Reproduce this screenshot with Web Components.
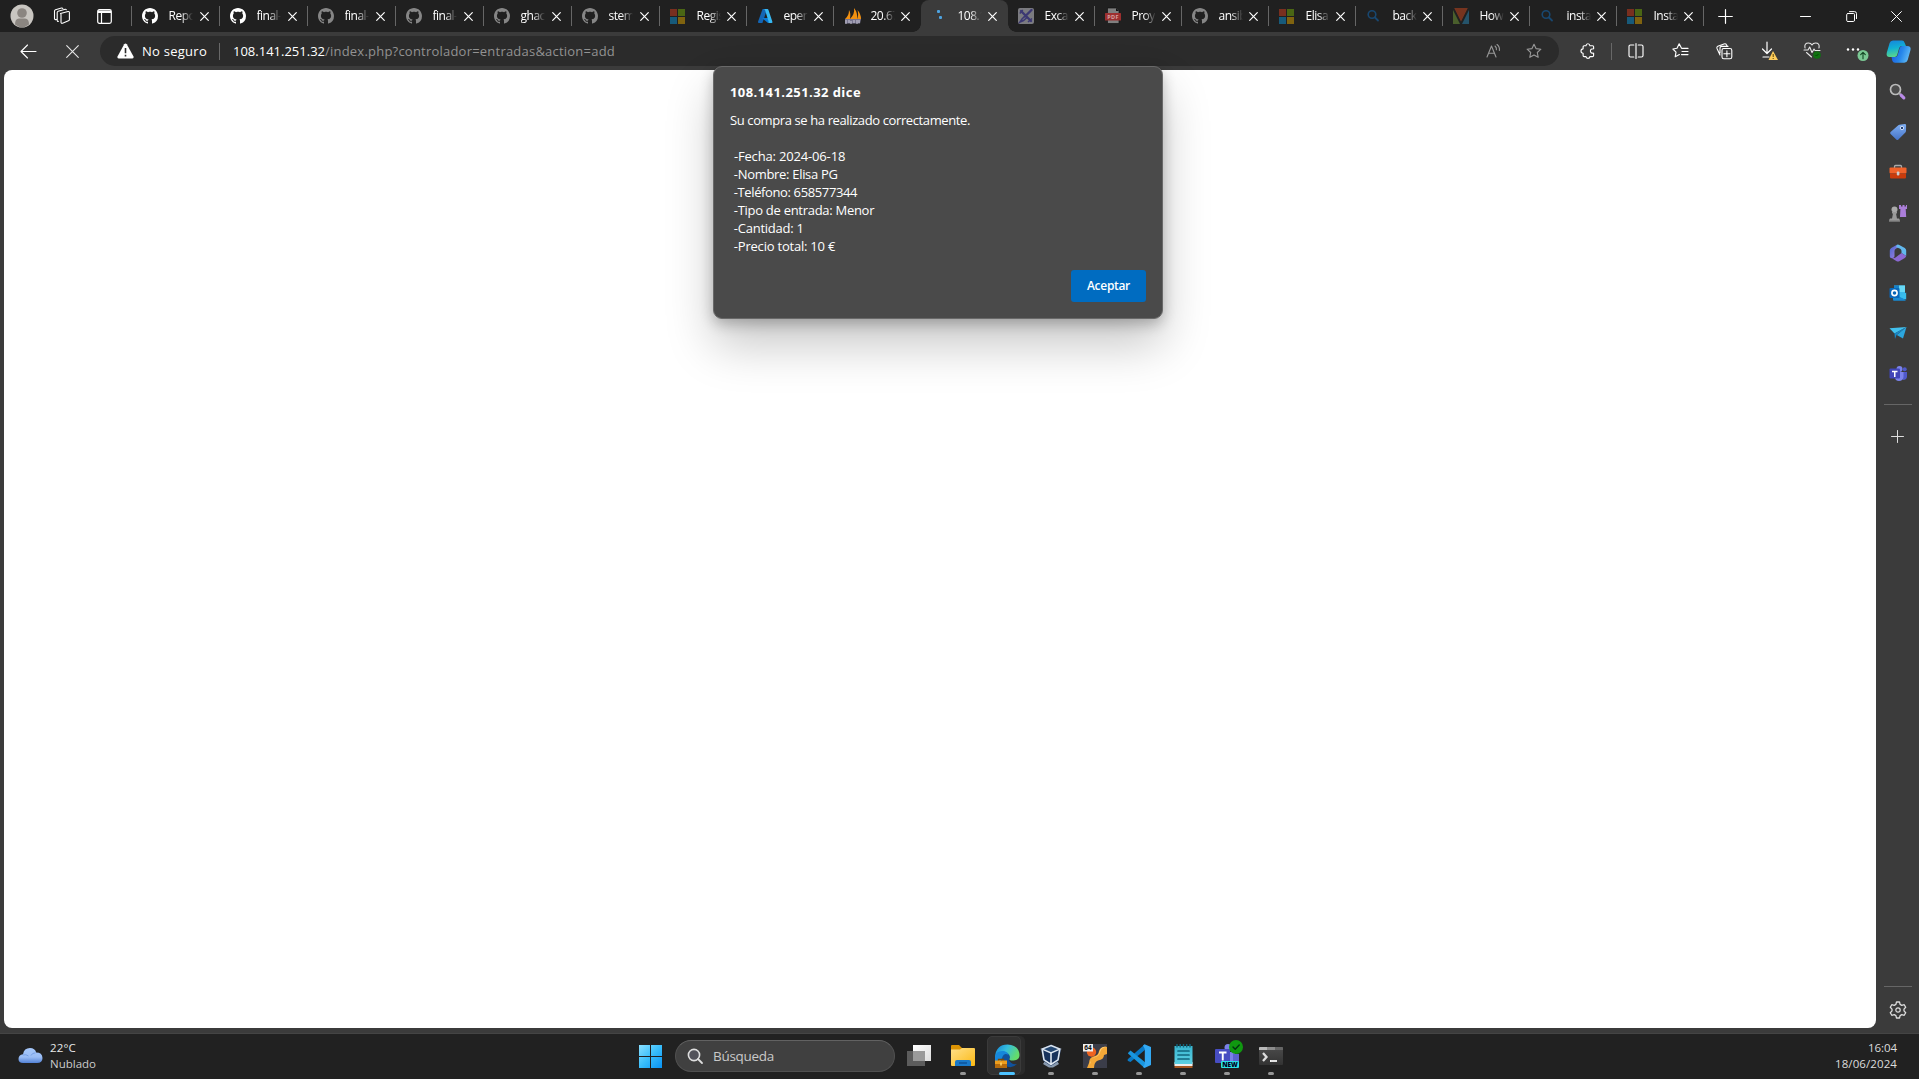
<!DOCTYPE html>
<html lang="es">
<head>
<meta charset="utf-8">
<title>108.141.251.32</title>
<style>
html,body{margin:0;height:100%;overflow:hidden;background:#3b3b3b}
body{font-family:"Open Sans","Noto Sans",sans-serif}
</style>
</head>
<body>
<desktop-screen></desktop-screen>
<script>
const CAT='<path transform="scale(SC)" fill="FC" d="M8 0C3.58 0 0 3.58 0 8c0 3.54 2.29 6.53 5.47 7.59.4.07.55-.17.55-.38 0-.19-.01-.82-.01-1.49-2.01.37-2.53-.49-2.69-.94-.09-.23-.48-.94-.82-1.13-.28-.15-.68-.52-.01-.53.63-.01 1.08.58 1.23.82.72 1.21 1.87.87 2.33.66.07-.52.28-.87.51-1.07-1.78-.2-3.64-.89-3.64-3.95 0-.87.31-1.59.82-2.15-.08-.2-.36-1.02.08-2.12 0 0 .67-.21 2.2.82.64-.18 1.32-.27 2-.27s1.36.09 2 .27c1.53-1.04 2.2-.82 2.2-.82.44 1.1.16 1.92.08 2.12.51.56.82 1.27.82 2.15 0 3.07-1.87 3.75-3.65 3.95.29.25.54.73.54 1.48 0 1.07-.01 1.93-.01 2.2 0 .21.15.46.55.38A8.01 8.01 0 0 0 16 8c0-4.42-3.58-8-8-8z"/>';
const line=(d,w=1.1,c='#fff')=>`<path d="${d}" fill="none" stroke="${c}" stroke-width="${w}" stroke-linecap="round" stroke-linejoin="round"/>`;
const STAR='M8 1.2l2 4.4 4.9.6-3.6 3.3.9 4.8L8 11.9l-4.2 2.4.9-4.8L1.1 6.2 6 5.6z';
/* each entry: [width, height, markup] */
const ICONS={
 gh:[16,16,CAT.replace('SC','1').replace('FC','#fff')],
 ghdim:[16,16,CAT.replace('SC','1').replace('FC','#868686')],
 ms:[15,15,'<path fill="#792f1f" d="M0 0h7v7H0z"/><path fill="#4a6614" d="M8 0h7v7H8z"/><path fill="#175a7a" d="M0 8h7v7H0z"/><path fill="#80630f" d="M8 8h7v7H8z"/>'],
 azure:[16,16,'<path fill="#1365b5" d="M5.6 1h4.6L5.4 15H2Q.7 15 1.1 13.6z"/><path fill="#0a7ad8" d="M5 10h6.5l1 4-1.500 1z"/><path fill="#37b8f2" d="M6 1h4.500q.7 0 .9.7l4 12Q15.700 15 14.500 15H11q1-.3.600-1.600L8 2Q7.700 1 6 1z"/>'],
 pma:[18,16,'<path fill="#f29111" d="M1 11Q5 8 5 2q2 3 1 9zM6 11Q11 6 10 0q4 5 3 11zM13 11q2-4 .5-9Q17 6 17 11z"/><path d="M1 11h16l-1 4.500H1z" fill="#77758f"/><path d="M2 16v-4M5 12v3M7 13v3M10 12v3M13 12v4M15 12v3" stroke="#d5d3df" stroke-width=".9"/>'],
 spin:[16,16,'<rect x="6" y="2" width="3" height="3" rx="1" fill="#4ea3e0"/><rect x="8" y="8" width="3" height="3" rx="1" fill="#4ea3e0"/>'],
 exca:[16,16,'<rect width="16" height="16" rx="2" fill="#7b7b80"/><path d="M3 3l10 10M13.500 2L7 8.500" stroke="#3c3873" stroke-width="2.400" stroke-linecap="round"/><path d="M7 8l-3 3-2 3 3.500-1.500L9 9.500M1.800 5.500l3-3.500M10 14l4-3.500" stroke="#3c3873" stroke-width="1.500" fill="none"/>'],
 pdf:[16,16,'<path d="M2.500 0h9L14 2.500V15.500H2.500z" fill="#7f7f7f" stroke="#111" stroke-width=".7"/><path d="M11 0v3h3" fill="#111"/><rect x="0" y="5" width="16" height="7.500" rx=".5" fill="#9c2f2f"/>','PDF'],
 find:[16,16,'<circle cx="6" cy="6.500" r="3.800" fill="none" stroke="#184770" stroke-width="1.600"/><path d="M9 9.500L12 12.500" stroke="#184770" stroke-width="1.800" stroke-linecap="round"/>'],
 v:[16,16,'<path fill="#76341f" d="M1 0h14L8 14z"/><path fill="#4a5f2c" d="M0 2l7 14H0z"/><path fill="#25536a" d="M16 2L9 16h7z"/><path d="M.5 0L8 15 15.500 0" fill="none" stroke="#222" stroke-width="1"/>'],
 close:[9,9,line('M.7.700l7.600 7.600M8.300.7L.7 8.300',1.2)],
 user:[24,24,'<circle cx="12" cy="12" r="11.500" fill="#c9c6c1"/><circle cx="12" cy="9" r="4.800" fill="#8b8681"/><path fill="#8b8681" d="M5 20.500q0-6 4-6h6q4 0 4 6Q12 26 5 20.500z"/>'],
 spaces:[18,18,line('M7.500 6.500l7.500-2q1.300-.3 1.400 1v7q0 1-1 1.300l-5.800 2.400q-1.500.5-1.600-1V7.500q0-.7-.5-1zM5.500 14.300q-1.300.5-1.300-1V5.500q0-1 1-1.300l7-1.900q.8-.1 1.100.5M3.300 12.400q-1.600.6-1.800-.8V4q0-1 1-1.300L8.500 1q1-.2 1.300.5',1.1)],
 tabact:[15,15,line('M2.500.7h10q1.800 0 1.800 1.800v10q0 1.800-1.800 1.800h-10q-1.800 0-1.800-1.800v-10Q.7.700 2.500.7zM4.500 4v10',1.2)+'<path d="M1 1.500h13V4H1z" fill="#fff"/>'],
 plus:[15,15,line('M7.500.7v13.600M.7 7.500h13.600',1.2)],
 plus2:[13,13,line('M6.500.5v12M.5 6.500h12',1,'#ddd')],
 min:[11,11,line('M.5 5.500h10',1)],
 rest:[11,11,line('M2 2.500h5.500q1 0 1 1V9q0 1.500-1 1.500H2Q.7 10.500.7 9.500V3.500q0-1 1.300-1zM3.500.600h5q2 0 2 2v5',1)],
 x11:[11,11,line('M.6.600l9.800 9.800M10.400.6L.6 10.400',1)],
 back:[17,15,line('M16 7.500H1M7.500 1L1 7.500 7.500 14',1.1)],
 stop:[13,13,line('M.7.700l11.600 11.600M12.300.7L.7 12.300',1.1,'#e8e8e8')],
 warn:[17,16,'<path d="M7.200 1.300q1.300-1.800 2.600 0l6.700 12.300q.6 1.900-1.200 2H1.700q-1.800-.1-1.200-2z" fill="#fff"/><path d="M8.500 5v5.200M8.500 11.800v1.700" stroke="#2b2b2b" stroke-width="1.600"/>'],
 star:[16,16,line(STAR,1.1,'#999')],
 read:[16,16,line('M1 14L5.500 3 10 14M2.700 10.200h5.600M9 3q1.800 1.500 1.400 3.800M11 1.500q2.800 2 2.400 6',1.1,'#999')],
 puzzle:[16,16,line('M5.400 2.700H6q.1-2 1.900-2t2 2h2.700q1 0 1 1v2.100q-3.200-.2-3.200 2.200t3.200 2.200v2.300q0 1.100-1.200 1.100H9.900q-.1 1.800-2 1.800T6 13.600H4.100q-1 0-1-1.100v-2.300Q1 10.200 1 8t2.100-2.200V3.700q0-1 1-1z',1.15)],
 split:[16,16,line('M5.800 2H2.500Q1 2 1 3.500v9Q1 14 2.500 14h3.300M10.200 2h3.300Q15 2 15 3.500v9q0 1.500-1.500 1.500h-3.300M8 .5v15',1.15)],
 favs:[17,16,line('M10 5.400L9.400 5 7.200.8 5 5.300.9 6l3.100 3.200-.8 4.600 4.200-2.300M10.500 5.400H16M10 8.500h6M9.500 11.600H16',1.15)],
 coll:[17,17,line('M7.500 5.500h6.500q1.800 0 1.800 1.800V14q0 1.800-1.800 1.800H7.800Q6 15.800 6 14V7.300q0-1.800 1.500-1.800zM10.900 7.700v6M7.900 10.700h6M4 12L1 5.500Q.4 4 1.800 3.300L8 .9q1.800-.6 2.600 1l.6 1.300M4 10V5.200Q4 3.400 5.500 3.400h6.500',1.1)],
 down:[20,20,line('M8 1v11M3.500 8L8 12.500 12.500 8M4 16h6',1.2)+'<path d="M14 10l5 9H9.500z" fill="#ffce5c"/><path d="M14.200 13v3M14.200 17v1" stroke="#5a4300" stroke-width="1"/>'],
 heart:[20,18,line('M2 6Q1 1 5.500 1 8 1 9 3q1-2 3.500-2Q17 1 16 6M1 8h4l1.700-3L9 10.500 11 7l1 1.500h5M3.500 10.500L8.500 15',1.1,'#e7e7e7')+'<circle cx="14" cy="13" r="3.800" fill="#0f7010"/><path d="M12.500 13l1 1 2-2" fill="none" stroke="#064706"/>'],
 more:[24,20,'<circle cx="3" cy="8.500" r="1.200" fill="#fff"/><circle cx="8" cy="8.500" r="1.200" fill="#fff"/><circle cx="13" cy="8.500" r="1.200" fill="#fff"/><circle cx="18" cy="14.500" r="5.500" fill="#7bc894"/>'+line('M18 17.700V11.500M15.700 13.700l2.300-2.300 2.300 2.300',1.1,'#124723')],
 copilot:[25,23,'<defs><linearGradient id="a" x2=".2" y2="1"><stop stop-color="#1783dd"/><stop offset=".5" stop-color="#11afd3"/><stop offset="1" stop-color="#58d58d"/></linearGradient><linearGradient id="b" x2="1" y2=".3"><stop stop-color="#184ee1"/><stop offset=".6" stop-color="#2687ea"/><stop offset="1" stop-color="#5bb5f4"/></linearGradient></defs><path fill="url(#a)" d="M7 .5h9q2 0 2.600 2.200L20 6h-4q-2 0-2.800 2l-2 7q-.6 2-2.500 2H3.500Q0 17 .7 13L3.600 3Q4.300.5 7 .5z"/><path fill="url(#b)" d="M13.700 8q.8-2 2.500-2H21q4.400 0 3.500 4l-2.800 10q-.9 2.700-3.500 2.700H9q-2 0-2.700-2L5.500 17h3.700q2 0 2.500-2z"/>'],
 s1:[18,18,'<circle cx="6.500" cy="6.500" r="5" fill="#4b4b4b" stroke="#bbb" stroke-width="1.700"/><path d="M10 10l2 2" stroke="#aaa" stroke-width="1.800"/><path d="M12.300 12.300l2.500 2.500" stroke="#b98be8" stroke-width="3.200" stroke-linecap="round"/>'],
 s2:[18,18,'<defs><linearGradient id="t" x2="0" y2="1"><stop stop-color="#7eaef3"/><stop offset="1" stop-color="#4674c8"/></linearGradient></defs><path fill="url(#t)" d="M10.500 1.800L15.800 1q1.300 0 1.300 1.200L17 8q-.1.900-.6 1.400l-7 7q-1 1-2.100 0L1.600 11q-1-1 0-2l7.700-6.700q.5-.4 1.200-.5z"/><circle cx="13" cy="5" r="1.700" fill="#234379" stroke="#dce9ff" stroke-width=".9"/>'],
 s3:[18,16,'<path d="M5.500 4V2.500q0-1 1-1h5q1 0 1 1V4" fill="none" stroke="#aaa" stroke-width="1.300"/><rect x=".5" y="3.500" width="17" height="6" rx="1" fill="#f0622a"/><path d="M1 9.500h16v4q0 1-1 1H2q-1 0-1-1z" fill="#c93b0b"/><rect x="7.800" y="7.500" width="2.600" height="4" rx="1" fill="#ccc"/>'],
 s4:[18,18,'<path fill="#ab7ed9" d="M10 1h2v1.500h1.500V1h2v1.500H17V1h1v4h-1.300l.5 8H11l.4-8H10z"/><circle cx="5.500" cy="5.500" r="3" fill="#aaa"/><path fill="#9a9a9a" d="M3 8h5v1.500H7l1 5h2q1 1 1 3H0q0-2 1-3h2l1-5H3z"/><path d="M0 17h11" stroke="#777"/>'],
 s5:[18,18,'<defs><linearGradient id="m" x2="1" y2="1"><stop stop-color="#4767d0"/><stop offset="1" stop-color="#a980e2"/></linearGradient></defs><path fill="url(#m)" d="M8 .8L2.200 4Q.8 5 .8 6.500v6q0 1.500 2 1.800 2 .2 2.700-1.800V7q0-1.500 1.300-2.200L10 3z"/><path fill="#62b8ed" d="M8 .8q1.200-.5 2.300.2L15.800 4Q17.200 5 17.200 6.500V12L12.500 9V7q0-1.500-1.300-2.200L7 3z"/><path fill="#8b69d2" d="M17.200 12q-.2 1.200-1.400 2l-5.500 3.200q-1.300.8-2.600 0L2.800 14.300q2 .2 3.700-.8l6-4.500z"/>'],
 s6:[18,16,'<path fill="#38b9ea" d="M5 .5h11V14H5z"/><path fill="#1580c9" d="M5 .5h5V7H5z"/><path fill="#67d8f5" d="M10 .5h6V7h-6z"/><path fill="#178ad3" d="M4 8l13 7q-.5.700-1.300.7H5q-1 0-1-1z"/><path fill="#39bdec" d="M17.200 7.500v7L10 11.500z"/><rect x=".5" y="3" width="10" height="10" rx="1" fill="#0867b9"/><circle cx="5.500" cy="8" r="2.600" fill="none" stroke="#fff" stroke-width="1.600"/>'],
 s7:[18,14,'<path fill="#42c1ee" d="M.5 2.200L17.500 1 5.500 7.500z"/><path fill="#1687c8" d="M5.500 7.500L17.500 1 7.500 9l-1.500 4z"/><path fill="#2ba6de" d="M17.500 1L14 12.500 7.800 9z"/>'],
 s8:[18,17,'<circle cx="10.500" cy="4" r="3" fill="#7b83eb"/><circle cx="15.700" cy="4.300" r="2" fill="#5059c9"/><path fill="#5059c9" d="M12 7h6v5q-.5 3-4 3z"/><path fill="#7b83eb" d="M6 7h8.500v5q-.5 4-4.500 4t-4-4z"/><rect x=".5" y="3.500" width="10.500" height="10" rx="1" fill="#4146b8"/><path d="M3 6.500h5.500M5.750 6.500V12" stroke="#fff" stroke-width="1.500"/>'],
 gear:[18,18,line('M7.500 1h3l.6 2.400 1.700 1 2.400-.7 1.500 2.600L15 8.100v1.800l1.700 1.800-1.500 2.600-2.400-.7-1.700 1-.6 2.400h-3l-.6-2.400-1.700-1-2.400.7-1.500-2.600L3 9.900V8.100L1.300 6.300l1.500-2.600 2.400.7 1.700-1z',1.3,'#ddd')+'<circle cx="9" cy="9" r="2.200" fill="none" stroke="#ddd" stroke-width="1.200"/>'],
 cloud:[25,17,'<defs><linearGradient id="c" x2="0" y2="1"><stop stop-color="#a6c8fb"/><stop offset=".6" stop-color="#9abdf5"/><stop offset="1" stop-color="#5382d6"/></linearGradient></defs><path fill="url(#c)" d="M5 16q-4.500 0-4.500-4T5 7.300Q6 1 12 1q5 0 6.200 4.600 6 0 6.300 5.300Q24.500 16 19 16z"/><path d="M5 8q3-1 5.500 1M17.500 5.800Q14 6 13 8.500" stroke="#769fe4" fill="none"/>'],
 win:[23,23,'<defs><linearGradient id="w" gradientUnits="userSpaceOnUse" x1="0" y1="0" x2="23" y2="23"><stop stop-color="#8ae0ff"/><stop offset=".5" stop-color="#38bdfb"/><stop offset="1" stop-color="#0892f4"/></linearGradient></defs><path fill="url(#w)" d="M0 0h11v11H0zM12 0h11v11H12zM0 12h11v11H0zM12 12h11v11H12z"/>'],
 tfind:[16,16,'<circle cx="7" cy="7" r="5.600" fill="#52525a" stroke="#dedede" stroke-width="1.600"/><path d="M11 11l4 4" stroke="#dedede" stroke-width="1.800" stroke-linecap="round"/>'],
 task:[24,22,'<defs><linearGradient id="q" x2="1" y2="1"><stop stop-color="#fff"/><stop offset="1" stop-color="#ddd"/></linearGradient></defs><path fill="url(#q)" d="M6 0h18v16H6z"/><path fill="#5c5c5c" d="M0 6h18v15H0z"/><path fill="#9a9a9a" d="M6 6h12v10H6z"/>'],
 files:[24,22,'<defs><linearGradient id="f" x2="1" y2="1"><stop stop-color="#ffe08a"/><stop offset="1" stop-color="#fcb913"/></linearGradient></defs><path fill="#dc9303" d="M0 1q0-1 1-1h7l3 3h11v6H0z"/><path fill="url(#f)" d="M0 4.500h9l2-1.500h12q1 0 1 1v16q0 1-1 1H1q-1 0-1-1z"/><path fill="#1a79c8" d="M4 21v-4q0-2 2-2h12q2 0 2 2v4z"/><path d="M8 18h8" stroke="#0b4d92" stroke-width="1.300"/>'],
 edge:[25,25,'<defs><linearGradient id="e" x2="1" y2=".4"><stop stop-color="#1180d6"/><stop offset=".5" stop-color="#35bede"/><stop offset="1" stop-color="#64dc6a"/></linearGradient></defs><path fill="#10529d" d="M8 8q-3 8 2 13 6 5 12-1-6 1-8-4l2-6z"/><path fill="url(#e)" d="M0 13Q1 .5 12.500.5 24 1 24.500 11q0 5-6 5.500-4 .2-4.200-1.500 1-1.500.4-3Q13 8 8.500 9 2 10 0 16z"/><path fill="#1687db" d="M0 13q1-7 9-6 4 1 4.500 4Q9 8 7 14l-2 6-5-2z"/><path d="M3.500 17v-1.500h5V17" stroke="#7c4906" fill="none" stroke-width="1.300"/><path fill="#ee9e1d" d="M0 16.500h12V24H0z"/><path fill="#b66b0c" d="M0 20h12v4H0z"/><path d="M6 18.500v3" stroke="#ffd76b" stroke-width="1.500"/>'],
 vbox:[22,24,'<path fill="#8a9bb0" d="M5 17h12l2 3-6 3.500H9L3 20z"/><path fill="#17325c" d="M11 .5l10 4.200-2 12L11 22l-8-5.300-2-12z"/><path fill="#254873" stroke="#dce5ef" stroke-width="1.500" d="M11 1.500l8.800 3.600L11 9 2.200 5.100z"/><path fill="none" stroke="#dce5ef" stroke-width="1.600" d="M2.200 5.500L4 15.800l7 4.700 7-4.700 1.800-10.300M11 9v11"/>'],
 putty:[24,24,'<path fill="#3b3d49" d="M0 0h24v24H0z"/><path fill="#f4a838" d="M24 3q-6-1-8 4-.5 4-4 5-6 1-6 7l-2 5h7q0-6 4-7.500 6-1 6-5.500l3-1z"/><path fill="#ffd27a" d="M24 3q-5 0-6.500 4-1 5-5 6-5 1-5 6l-1 2q1-7 6-8.500 3.500-1 4-5Q18 2 24 3z"/><circle cx="8.500" cy="8" r="4.700" fill="#ee6420"/><path fill="#eee" d="M0 0h10v7.500H0z"/>','64'],
 code:[24,24,'<path fill="#0878c5" d="M1 15L17 1l2 4L3.500 18 1 17q-1-1 0-2z"/><path fill="#1996df" d="M1 9l2.500-2.500L19 19l-2 4.500L1 9.500z"/><path fill="#33a9f3" d="M17.500.2L24 3v18l-6.500 3-1.500-1 1.800-3V5L16 1.500z"/>'],
 note:[19,24,'<defs><linearGradient id="n" x2="0" y2="1"><stop stop-color="#39b5cf"/><stop offset="1" stop-color="#5cd0e3"/></linearGradient></defs><path fill="#a65721" d="M.5 19h18v5H.5z"/><path fill="#eee" d="M.5 18h18v4H.5z"/><path fill="url(#n)" d="M.5 2h18v18H.5z"/><path d="M3 0v3.500M6.200 0v3.500M9.500 0v3.500M12.700 0v3.500M16 0v3.500" stroke="#12667d" stroke-width="1.400"/><path d="M4 7h11M4 11h11M4 15h11" stroke="#12667d" stroke-width="1.700" stroke-linecap="round"/>'],
 teams:[28,28,'<path fill="#7a80e8" d="M10 12h10v12H10z"/><path fill="#5b62cf" d="M18 14h6v10h-6z"/><circle cx="13" cy="7.500" r="3.500" fill="#7a80e8"/><rect x="0" y="9" width="15" height="14" rx="1" fill="#474dc2"/><path d="M4 12.500h7.500M7.750 12.500v8" stroke="#fff" stroke-width="1.900"/><circle cx="21" cy="7" r="7" fill="#109810"/>'+line('M18 7l2.200 2.200L24.200 5',1.4,'#031')+'<rect x="6" y="21" width="18" height="7" rx="1" fill="#2ce0e5"/>','NEW'],
 term:[24,18,'<defs><linearGradient id="k" x2="0" y2="1"><stop stop-color="#4b4b4b"/><stop offset="1" stop-color="#333"/></linearGradient></defs><rect width="24" height="18" rx="1" fill="url(#k)"/><path fill="#b9b9b9" d="M1 0h7v3H0V1q0-1 1-1z"/><path fill="#8c8c8c" d="M8 0h8v3H8z"/><path fill="#666" d="M16 0h7q1 0 1 1v2h-8z"/><path d="M4 6l3.500 4L4 14" stroke="#ddd" stroke-width="2.300" fill="none"/><path d="M11 14h7" stroke="#f4f4f4" stroke-width="1.800"/>']
};
class UiIcon extends HTMLElement{
 constructor(){super();this.attachShadow({mode:'open'})}
 connectedCallback(){
  const n=this.getAttribute('name'),[w,h,m,label]=ICONS[n];
  this.shadowRoot.innerHTML=`<style>:host{display:grid;flex:none;width:${w}px;height:${h}px;line-height:1}
  svg,span{grid-area:1/1}svg{display:block;overflow:visible}
  span{font:700 6px/7px "Open Sans",sans-serif;text-align:center;color:#fff;z-index:1}
  .pdf{padding-top:5.500px;color:#d9a3a3;font-size:5.500px;letter-spacing:.4px}
  .putty{color:#111;justify-self:start;width:10px;font-size:6.500px}
  .teams{color:#002;align-self:end;padding-left:2px;font-size:6.500px;font-weight:800}</style>
  <svg width="${w}" height="${h}" viewBox="0 0 ${w} ${h}" aria-hidden="true">${m}</svg>${label?`<span class="${n}">${label}</span>`:''}`;
 }
}
customElements.define('ui-icon',UiIcon);

/* A single line of text tracked so that it spans the given width. */
class FitText extends HTMLElement{
 constructor(){super();this.attachShadow({mode:'open'}).innerHTML='<style>:host{display:block;flex:none;white-space:pre}span{display:inline-block;white-space:pre}</style><span><slot></slot></span>'}
 connectedCallback(){
  const s=this.shadowRoot.querySelector('span');s.style.letterSpacing='0px';
  const n=this.textContent.length,w=+this.getAttribute('w');
  s.style.letterSpacing=((w-s.getBoundingClientRect().width)/n)+'px';this.style.width=w+'px';
 }
}

class BrowserTab extends HTMLElement{
 constructor(){super();this.attachShadow({mode:'open'}).innerHTML=`<style>
 :host{display:flex;flex:none;box-sizing:border-box;height:32px;align-items:center;padding-left:10px;position:relative;color:#fff;font-size:12px}
 :host([sep])::after{content:"";position:absolute;right:0;top:6px;width:1px;height:20px;background:#666}
 .i{width:26.500px;display:flex}
 .t{width:24px;margin-right:6.500px;overflow:hidden;white-space:nowrap;letter-spacing:-.5px;line-height:20px;-webkit-mask-image:linear-gradient(90deg,#000 50%,transparent);mask-image:linear-gradient(90deg,#000 50%,transparent)}
 :host([w="88"]) .t{margin-right:7.500px}
 :host([active]){background:#3b3b3b;border-radius:8px 8px 0 0;z-index:1}
 :host([active])::before{content:"";position:absolute;left:-8px;right:-8px;bottom:0;height:8px;
 background:radial-gradient(circle at 0 0,transparent 7.500px,#3b3b3b 8px) left/8px 8px no-repeat,radial-gradient(circle at 100% 0,transparent 7.500px,#3b3b3b 8px) right/8px 8px no-repeat}
 </style><span class="i"></span><span class="t"><slot></slot></span><ui-icon name="close"></ui-icon>`}
 connectedCallback(){this.style.width=this.getAttribute('w')+'px';
  this.shadowRoot.querySelector('.i').innerHTML=`<ui-icon name="${this.getAttribute('icon')}"></ui-icon>`}
}
customElements.define('browser-tab',BrowserTab);

const TABS=[['gh','Repos',88],['gh','final-',88],['ghdim','final-',88],['ghdim','final-',88],['ghdim','ghac',88],['ghdim','stem',88],['ms','Regis',87],['azure','eper',87],['pma','20.67',87],['spin','108.1',87,1],['exca','Excal',87],['pdf','Proy',87],['ghdim','ansib',87],['ms','Elisa',87],['find','back',87],['v','How',87],['find','insta',87],['ms','Insta',87]];
class TabStrip extends HTMLElement{
 constructor(){super();this.attachShadow({mode:'open'}).innerHTML=`<style>
 :host{display:flex;height:32px;background:#202020}
 .lead,.ctl{display:flex;align-items:center}
 .lead{box-sizing:border-box;width:132px;padding-left:10px}
 .lead::after{content:"";width:1px;height:20px;background:#666;margin-left:auto}
 .b{display:flex;justify-content:center;width:42px}
 .new{display:flex;align-items:center;margin-left:14px}
 .ctl{margin-left:auto}.ctl>span{display:flex;justify-content:center;width:46px}
 </style><div class="lead"><ui-icon name="user"></ui-icon><span class="b" style="margin-left:7px"><ui-icon name="spaces"></ui-icon></span><span class="b"><ui-icon name="tabact"></ui-icon></span></div>
 ${TABS.map(([i,t,w,a],k)=>`<browser-tab icon="${i}" w="${w}" ${a?'active':k==8?'':'sep'}>${t}</browser-tab>`).join('')}
 <div class="new"><ui-icon name="plus"></ui-icon></div>
 <div class="ctl"><span><ui-icon name="min"></ui-icon></span><span><ui-icon name="rest"></ui-icon></span><span style="width:45px"><ui-icon name="x11"></ui-icon></span></div>`}
}

class NavBar extends HTMLElement{
 constructor(){super();this.attachShadow({mode:'open'}).innerHTML=`<style>
 :host{display:flex;height:38px;box-sizing:border-box;padding-top:4px;background:#3b3b3b;color:#fff;font-size:13px;line-height:30px}
 :host>*,.c,.o{height:30px}
 .c{display:flex;align-items:center;justify-content:center;flex:none;width:44px}
 .o{display:flex;align-items:center;box-sizing:border-box;width:1459px;background:#2b2b2b;border-radius:15px;padding-left:17px;flex:none}
 .s{width:1px;height:17px;background:#686868}
 .p{color:#929292}
 </style><span class="c" style="padding-left:6px">
 <ui-icon name="back"></ui-icon></span><span class="c"><ui-icon name="stop"></ui-icon></span><span style="width:6px"></span>
 <div class="o"><ui-icon name="warn"></ui-icon><fit-text w="65" style="margin-left:8px">No seguro</fit-text><i class="s" style="margin:0 13px 0 12px"></i><fit-text w="92">108.141.251.32</fit-text><fit-text w="290" class="p">/index.php?controlador=entradas&amp;action=add</fit-text>
 <span class="c" style="width:40px;margin-left:auto;padding-left:1px"><ui-icon name="read"></ui-icon></span><span class="c" style="width:40px;margin-right:5px"><ui-icon name="star"></ui-icon></span></div>
 <span class="c" style="margin-left:7px"><ui-icon name="puzzle"></ui-icon></span><i class="s" style="margin:7px 2px 0 1px"></i>
 ${['split','favs','coll','down','heart','more'].map(n=>`<span class="c"><ui-icon name="${n}" ${/down|heart|more/.test(n)?'style="margin-left:2px"':''}></ui-icon></span>`).join('')}
 <span class="c" style="width:41px"><ui-icon name="copilot"></ui-icon></span>`}
}

class SideBar extends HTMLElement{
 constructor(){super();this.attachShadow({mode:'open'}).innerHTML=`<style>
 :host{display:flex;flex-direction:column;align-items:center;width:42px;flex:none;box-sizing:border-box;padding-top:2px}
 span{display:flex;align-items:center;justify-content:center;height:40.200px}
 hr{border:0;margin:0;width:28px;height:1px;background:#666}
 </style>${[1,2,3,4,5,6,7,8].map(n=>`<span><ui-icon name="s${n}"></ui-icon></span>`).join('')}
 <hr style="margin-top:10px"><span style="margin-top:12px;padding-right:1px"><ui-icon name="plus2"></ui-icon></span>
 <hr style="margin-top:auto"><span style="height:45px;margin-bottom:-4px"><ui-icon name="gear"></ui-icon></span>`}
}

class AlertDialog extends HTMLElement{
 constructor(){super();this.attachShadow({mode:'open'}).innerHTML=`<style>
 :host{display:flex;flex-direction:column;box-sizing:border-box;width:450px;height:253px;padding:16px 16px 16px;background:#4a4a4a;border:1px solid #696969;border-radius:9px;color:#fff;font-size:13px;line-height:18px;
 box-shadow:0 26px 48px rgba(0,0,0,.22),0 5px 14px rgba(0,0,0,.24)}
 h1{margin:0 0 9px;font-size:13px;line-height:19px;font-weight:700}
 button{align-self:flex-end;margin-top:auto;width:75px;height:32px;border:0;border-radius:3px;background:#006cc1;color:#fff;font:600 12px/32px "Open Sans",sans-serif;padding:0;display:flex;justify-content:center}
 </style><h1><slot name="title"></slot></h1><div><slot></slot></div><button><fit-text w="43">Aceptar</fit-text></button>`}
}

class TaskBar extends HTMLElement{
 constructor(){super();this.attachShadow({mode:'open'}).innerHTML=`<style>
 :host{display:grid;grid-template-columns:1fr auto 1fr;height:46px;box-sizing:border-box;background:#212121;color:#ddd;font-size:11.500px;line-height:16px;border-top:1px solid #444}
 .w{display:flex;align-items:center;padding:0 0 2px 18px;gap:7px;color:#e8e8e8}
 .m{display:flex;align-items:center;height:44px;padding-left:13px}
 .a{display:flex;position:relative;align-items:center;justify-content:center;width:44px;height:44px}
 .a.r::after{content:"";position:absolute;bottom:3px;width:6px;height:3px;border-radius:2px;background:#969696}
 .a.on::after{width:16px;background:#4cc2ff}
 .a.on::before{content:"";position:absolute;left:2px;top:2px;width:34px;height:39px;box-sizing:border-box;border:1px solid #3a3a3a;border-radius:5px;background:#303030;box-shadow:4px 0 0 0 #2b2b2b}
 .a ui-icon{position:relative}
 .q{display:flex;align-items:center;box-sizing:border-box;width:220px;height:32px;border-radius:16px;border:1px solid #505050;border-top-color:#626262;background:#404040;padding-left:11px;gap:10px;font-size:13.500px;color:#c9c9c9;margin:0 2px 0 13px}
 .t{display:flex;flex-direction:column;align-items:flex-end;justify-content:center;padding:0 22px 2px 0}
 </style><div class="w"><ui-icon name="cloud"></ui-icon><div><fit-text w="26">22°C</fit-text><fit-text w="46" style="color:#ccc">Nublado</fit-text></div></div>
 <div class="m"><ui-icon name="win"></ui-icon><div class="q"><ui-icon name="tfind"></ui-icon><fit-text w="61">Búsqueda</fit-text></div>
 <span class="a"><ui-icon name="task"></ui-icon></span>
 ${['files','edge','vbox','putty','code','note','teams','term'].map(n=>`<span class="a r ${n=='edge'?'on':''}"><ui-icon name="${n}" ${n=='teams'?'style="margin:-5px 0 0 4px"':''}></ui-icon></span>`).join('')}</div>
 <div class="t"><fit-text w="29">16:04</fit-text><fit-text w="62">18/06/2024</fit-text></div>`}
}

const LINES=[[' -Fecha: 2024-06-18',114.500],[' -Nombre: Elisa PG',107],[' -Teléfono: 658577344',126.500],[' -Tipo de entrada: Menor',143.500],[' -Cantidad: 1',73],[' -Precio total: 10 €',104.500]];
class DesktopScreen extends HTMLElement{
 constructor(){super();this.attachShadow({mode:'open'}).innerHTML=`<style>
 :host{display:flex;flex-direction:column;width:1919px;height:1079px;background:#3b3b3b;position:relative}
 .b{display:flex;flex:1;min-height:0;padding-left:4px}
 main{width:1872px;height:958px;background:#fff;border-radius:8px;flex:none}
 side-bar{margin-left:1px;height:958px}
 alert-dialog{position:absolute;left:713px;top:66px;z-index:5}
 .l{padding-left:.7px}
 </style><tab-strip></tab-strip><nav-bar></nav-bar><div class="b"><main></main><side-bar></side-bar></div><task-bar></task-bar>
 <alert-dialog><fit-text slot="title" w="131">108.141.251.32 dice</fit-text><fit-text w="240">Su compra se ha realizado correctamente.</fit-text><div style="height:18px"></div>${LINES.map(([t,w])=>`<fit-text class="l" w="${w}">${t}</fit-text>`).join('')}</alert-dialog>`}
}
customElements.define('tab-strip',TabStrip);
customElements.define('nav-bar',NavBar);
customElements.define('side-bar',SideBar);
customElements.define('alert-dialog',AlertDialog);
customElements.define('task-bar',TaskBar);
customElements.define('desktop-screen',DesktopScreen);
customElements.define('fit-text',FitText);
</script>
</body>
</html>
